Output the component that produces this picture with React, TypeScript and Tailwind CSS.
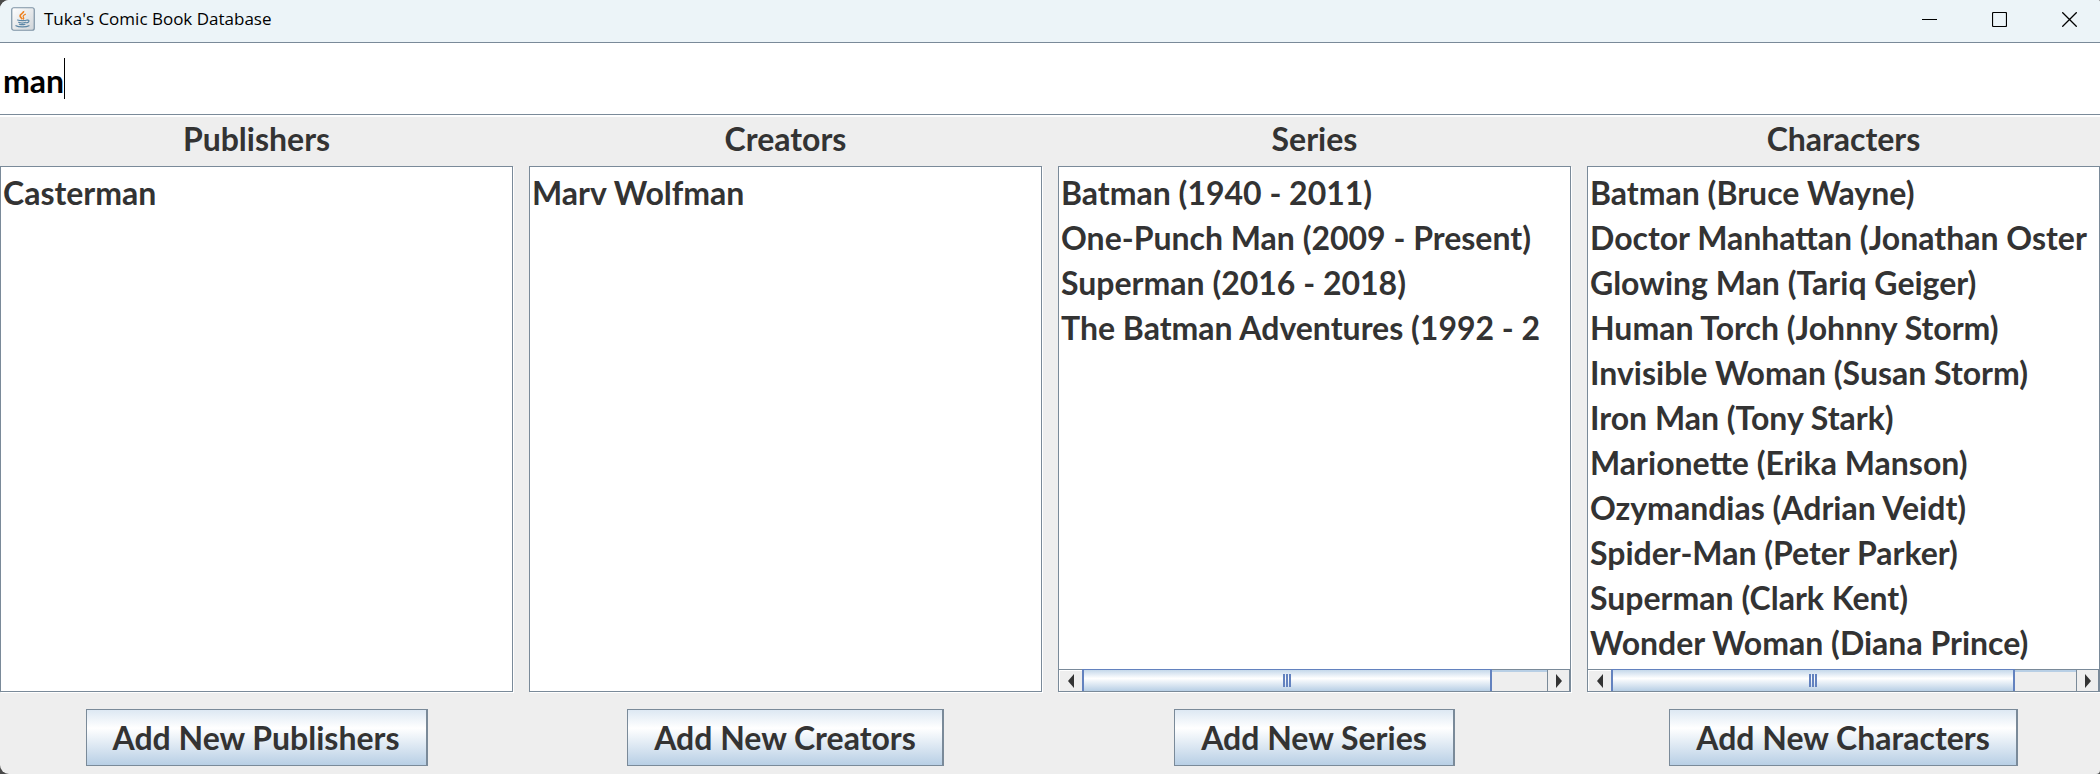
import { useState } from "react";

type Thumb = { size: number; rest: number };

type Column = {
  title: string;
  items: string[];
  scroll?: Thumb;
};

const columns: Column[] = [
  { title: "Publishers", items: ["Casterman"] },
  { title: "Creators", items: ["Marv Wolfman"] },
  {
    title: "Series",
    items: [
      "Batman (1940 - 2011)",
      "One-Punch Man (2009 - Present)",
      "Superman (2016 - 2018)",
      "The Batman Adventures (1992 - 2",
    ],
    scroll: { size: 408, rest: 56 },
  },
  {
    title: "Characters",
    items: [
      "Batman (Bruce Wayne)",
      "Doctor Manhattan (Jonathan Oster",
      "Glowing Man (Tariq Geiger)",
      "Human Torch (Johnny Storm)",
      "Invisible Woman (Susan Storm)",
      "Iron Man (Tony Stark)",
      "Marionette (Erika Manson)",
      "Ozymandias (Adrian Veidt)",
      "Spider-Man (Peter Parker)",
      "Superman (Clark Kent)",
      "Wonder Woman (Diana Prince)",
    ],
    scroll: { size: 401, rest: 63 },
  },
];

function JavaIcon() {
  return (
    <svg width="24" height="24" viewBox="0 0 24 24" aria-hidden="true">
      <defs>
        <linearGradient id="tile" x1="0" y1="0" x2="1" y2="1">
          <stop offset="0" stopColor="#ffffff" />
          <stop offset="1" stopColor="#cfd4d8" />
        </linearGradient>
      </defs>
      <rect x="0.75" y="0.75" width="22.5" height="22.5" rx="2" fill="url(#tile)" stroke="#7d93a5" strokeWidth="1.2" />
      <path d="M12.6 4c.5 2.3-3.7 2.9-3.5 5 .1 1.3 1.5 2 2.2 3.2" fill="none" stroke="#ee8322" strokeWidth="1.7" />
      <path d="M14.8 7.2c-1.8.7-3.1 1.5-2.5 2.7.5.9.9 1.5-.1 2.6" fill="none" stroke="#ee8322" strokeWidth="1.3" />
      <path d="M6.6 13c2.5 1 7.5.9 9.600 0M16.2 13.2c2.2-.8 2.7 1.9-.4 2.7M7.6 15.3c2 .8 5.3.8 7.2 0M8.4 17.2c1.6.6 4 .6 5.6 0M5 18.7c2.3 1.6 10.5 1.5 13 0" fill="none" stroke="#5b86a5" strokeWidth="1.2" strokeLinecap="round" />
    </svg>
  );
}

function ScrollButton({ label, points, side }: { label: string; points: string; side: string }) {
  return (
    <button type="button" aria-label={label} className={"flex w-[23px] shrink-0 items-center justify-center bg-[#eee] " + side}>
      <svg width="6" height="14" viewBox="0 0 6 14" aria-hidden="true">
        <polygon points={points} fill="#333" />
      </svg>
    </button>
  );
}

function ScrollBar({ title, scroll }: { title: string; scroll: Thumb }) {
  return (
    <div className="flex h-[22px] shrink-0 border-t border-[#7a8a99]">
      <ScrollButton label={"Scroll " + title + " left"} points="6,0 0,7 6,14" side="border-t border-l border-white" />
      <div className="flex min-w-0 flex-1 border-t-2 border-[#b8cfe5] bg-[#eee]">
        <div
          className="-mt-[3px] flex items-center justify-center gap-px border-x-2 border-t border-[#6382bf] bg-linear-to-b from-[#c5d8ea] via-white via-40% to-[#b8cfe5]"
          style={{ flexGrow: scroll.size }}
        >
          <span className="h-[13px] w-[2px] bg-[#6382bf]" />
          <span className="h-[13px] w-[2px] bg-[#6382bf]" />
          <span className="h-[13px] w-[2px] bg-[#6382bf]" />
        </div>
        <div style={{ flexGrow: scroll.rest }} />
      </div>
      <ScrollButton label={"Scroll " + title + " right"} points="0,0 6,7 0,14" side="border-x border-[#7a8a99]" />
    </div>
  );
}

function ColumnPanel({ column }: { column: Column }) {
  return (
    <section className="flex min-h-0 min-w-0 flex-col">
      <h2 className="pt-px pb-[7px] text-center leading-[41px]">{column.title}</h2>
      <div className="flex min-h-0 flex-1 flex-col border border-[#7a8a99] bg-white shadow-[1px_1px_0_#fff]">
        <ul className="min-h-0 flex-1 overflow-hidden px-[2px] pt-[3px]">
          {column.items.map((item) => (
            <li key={item} className="leading-[45px] whitespace-nowrap">
              {item}
            </li>
          ))}
        </ul>
        {column.scroll && <ScrollBar title={column.title} scroll={column.scroll} />}
      </div>
      <div className="flex justify-center pt-[17px] pb-2">
        <button
          type="button"
          className="h-[57px] border border-r-2 border-[#7a8a99] bg-linear-to-b from-[#dde8f3] via-white via-33% to-[#b8cfe5] px-[26px] pt-px whitespace-nowrap"
        >
          Add New {column.title}
        </button>
      </div>
    </section>
  );
}

export default function App() {
  const [query, setQuery] = useState("man");
  return (
    <div className="h-screen bg-[#4a4a4a]">
      <div className="flex h-full flex-col overflow-hidden rounded-tl-[9px] rounded-tr-[2px] rounded-br-[4px] rounded-bl-[9px] bg-[#eee] font-['Comic_Sans_MS','Lato',sans-serif] text-[32px] font-bold text-[#333]">
        <header className="flex h-[42px] shrink-0 items-center bg-[#ecf4f8] pl-[11px] font-['Segoe_UI','Open_Sans',sans-serif] text-[17px] font-normal text-black">
          <div className="flex flex-1 items-center gap-[9px] pb-1">
            <JavaIcon />
            <h1 className="leading-6">Tuka's Comic Book Database</h1>
          </div>
          <div className="flex h-full gap-2 pb-[3px]">
            <button type="button" aria-label="Minimize" className="flex w-[62px] items-center justify-center">
              <svg width="15" height="15" viewBox="0 0 15 15" aria-hidden="true">
                <path d="M0 7.5h15" stroke="#000" />
              </svg>
            </button>
            <button type="button" aria-label="Maximize" className="flex w-[62px] items-center justify-center">
              <svg width="15" height="15" viewBox="0 0 15 15" aria-hidden="true">
                <rect x="0.5" y="0.5" width="14" height="14" rx="1" fill="none" stroke="#000" strokeWidth="1.2" />
              </svg>
            </button>
            <button type="button" aria-label="Close" className="flex w-[62px] items-center justify-center">
              <svg width="15" height="15" viewBox="0 0 15 15" aria-hidden="true">
                <path d="M0.3 0.3l14.400 14.400M14.7 0.3L0.3 14.7" stroke="#000" strokeWidth="1.3" />
              </svg>
            </button>
          </div>
        </header>
        <label className="flex h-[73px] shrink-0 items-center border-y border-[#7a8a99] bg-white pl-[3px]">
          <span className="sr-only">Search</span>
          <input
            type="text"
            value={query}
            onChange={(e) => setQuery(e.target.value)}
            className="field-sizing-content h-[60px] pt-1 text-black caret-transparent outline-none"
          />
          <span className="h-[41px] w-px bg-black" />
        </label>
        <main className="grid min-h-0 flex-1 grid-cols-4 grid-rows-1 gap-x-4 border-t-2 border-white">
          {columns.map((column) => (
            <ColumnPanel key={column.title} column={column} />
          ))}
        </main>
      </div>
    </div>
  );
}
